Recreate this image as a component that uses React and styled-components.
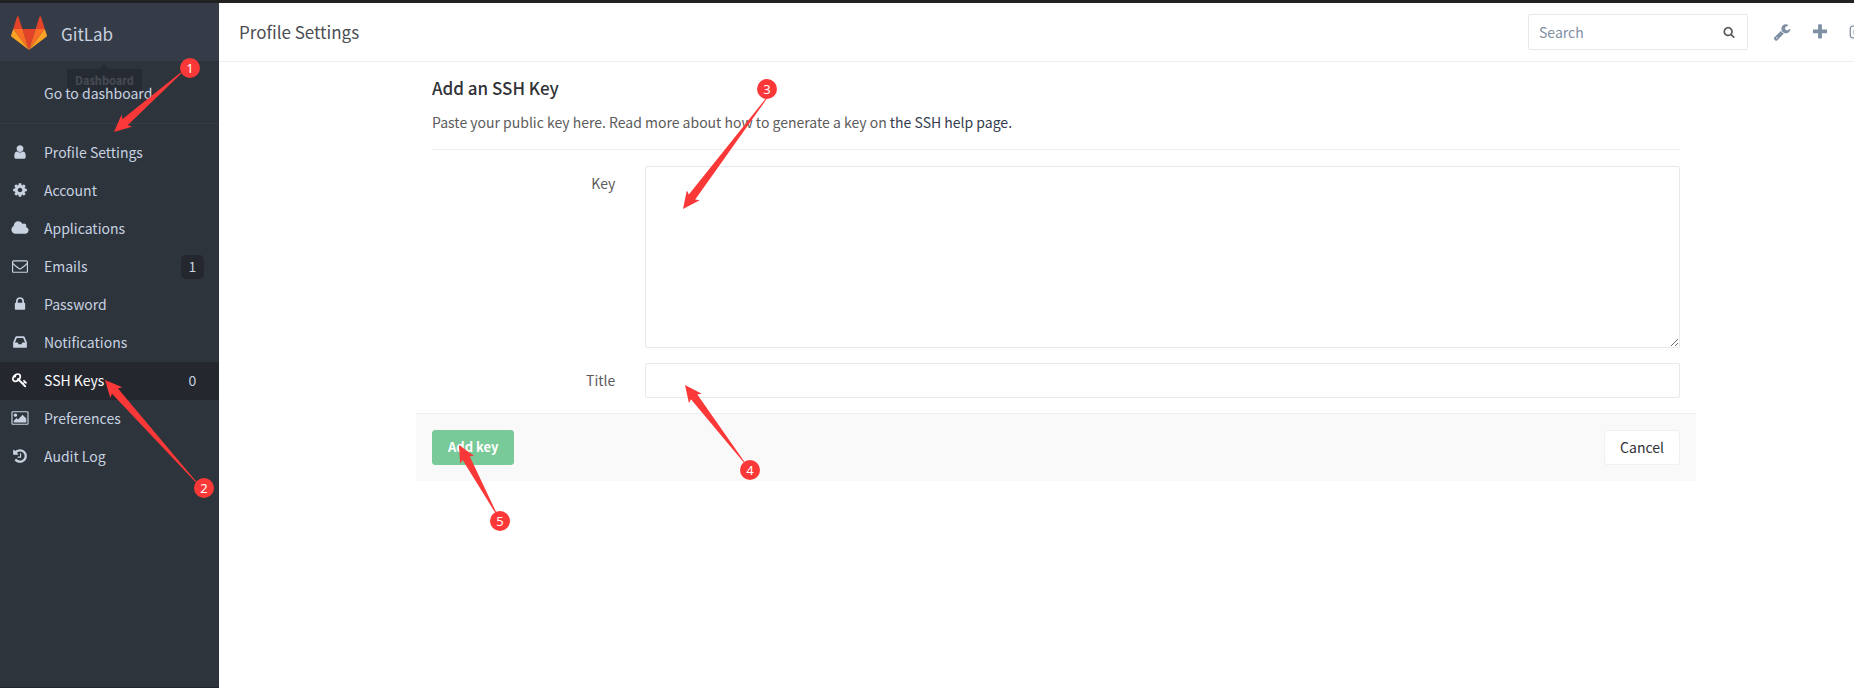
import React from "react";
import styled, { createGlobalStyle } from "styled-components";

const GlobalStyle = createGlobalStyle`
  *, *::before, *::after { box-sizing: border-box; }
  html, body, #root { height: 100%; }
  body {
    margin: 0;
    overflow: hidden;
    background: #fff;
    color: #5c5c5c;
    font-family: "Noto Sans CJK SC", "Liberation Sans", sans-serif;
    font-size: 14px;
    line-height: 20px;
  }
  a { color: inherit; text-decoration: none; }
`;

const ICONS = {
  user: "M1536 1399q0 109-62.5 187t-150.5 78h-854q-88 0-150.5-78t-62.5-187q0-85 8.5-160.5t31.5-152 58.5-131 94-89 134.5-34.5q131 128 313 128t313-128q76 0 134.5 34.5t94 89 58.5 131 31.5 152 8.5 160.5zm-256-887q0 159-112.5 271.5t-271.5 112.5-271.5-112.5-112.5-271.5 112.5-271.5 271.5-112.5 271.5 112.5 112.5 271.5z",
  gear: "M1152 896q0-106-75-181t-181-75-181 75-75 181 75 181 181 75 181-75 75-181zm512-109v222q0 12-8 23t-20 13l-185 28q-19 54-39 91 35 50 107 138 10 12 10 25t-9 23q-27 37-99 108t-94 71q-12 0-26-9l-138-108q-44 23-91 38-16 136-29 186-7 28-36 28h-222q-14 0-24.5-8.5t-11.5-21.5l-28-184q-49-16-90-37l-141 107q-10 9-25 9-14 0-25-11-126-114-165-168-7-10-7-23 0-12 8-23 15-21 51-66.5t54-70.5q-27-50-41-99l-183-27q-13-2-21-12.5t-8-23.5v-222q0-12 8-23t19-13l186-28q14-46 39-92-40-57-107-138-10-12-10-24 0-10 9-23 26-36 98.5-107.5t94.5-71.5q13 0 26 10l138 107q44-23 91-38 16-136 29-186 7-28 36-28h222q14 0 24.5 8.5t11.5 21.5l28 184q49 16 90 37l142-107q9-9 24-9 13 0 25 10 129 119 165 170 7 8 7 22 0 12-8 23-15 21-51 66.5t-54 70.5q26 50 41 98l183 28q13 2 21 12.5t8 23.5z",
  cloud: "M1856 1152q0 159-112.5 271.5t-271.5 112.5h-1088q-185 0-316.5-131.5t-131.5-316.5q0-132 71-241.5t187-163.5q-2-28-2-43 0-212 150-362t362-150q158 0 286.5 88t187.5 230q70-62 166-62 106 0 181 75t75 181q0 75-41 138 129 30 213 134.5t84 239.5z",
  envelope: "M1664 1504v-768q-32 36-69 66-268 206-426 338-51 43-83 67t-86.5 48.5-102.5 24.5h-2q-48 0-102.5-24.5t-86.5-48.5-83-67q-158-132-426-338-37-30-69-66v768q0 13 9.5 22.5t22.5 9.5h1472q13 0 22.5-9.5t9.5-22.5zm0-1051v-24.5l-.5-13-3-12.5-5.5-9-9-7.5-14-2.5h-1472q-13 0-22.5 9.5t-9.5 22.5q0 168 147 284 193 152 401 317 6 5 35 29.5t46 37.5 44.5 31.5 50.5 27.5 43 9h2q20 0 43-9t50.5-27.5 44.5-31.5 46-37.5 35-29.5q208-165 401-317 54-43 100.5-115.5t46.5-131.5zm128-37v1088q0 66-47 113t-113 47h-1472q-66 0-113-47t-47-113v-1088q0-66 47-113t113-47h1472q66 0 113 47t47 113z",
  lock: "M640 768h512v-192q0-106-75-181t-181-75-181 75-75 181v192zm832 96v576q0 40-28 68t-68 28h-960q-40 0-68-28t-28-68v-576q0-40 28-68t68-28h32v-192q0-184 132-316t316-132 316 132 132 316v192h32q40 0 68 28t28 68z",
  inbox: "M1151 960h316q-1-3-2.5-8t-2.5-8l-212-496h-708l-212 496q-1 2-2.5 8t-2.5 8h316l95 192h320zm513 30v482q0 26-19 45t-45 19h-1408q-26 0-45-19t-19-45v-482q0-62 25-123l238-552q10-25 36.5-42t52.5-17h832q26 0 52.5 17t36.5 42l238 552q25 61 25 123z",
  key: "M832 512q0-80-56-136t-136-56-136 56-56 136q0 42 19 83-41-19-83-19-80 0-136 56t-56 136 56 136 136 56 136-56 56-136q0-42-19-83 41 19 83 19 80 0 136-56t56-136zm851 704q0 17-49 66t-66 49q-9 0-28.5-16t-36.5-33-38.5-40-24.5-26l-96 96 220 220q28 28 28 68 0 42-39 81t-81 39q-40 0-68-28l-671-671q-176 131-365 131-163 0-265.5-102.5t-102.5-265.5q0-160 95-313t248-248 313-95q163 0 265.5 102.5t102.5 265.5q0 189-131 365l355 355 96-96q-3-3-26-24.5t-40-38.5-33-36.5-16-28.5q0-17 49-66t66-49q13 0 23 10 6 6 46 44.5t82 79.5 86.5 86 73 78 28.5 41z",
  picture: "M576 576q0 80-56 136t-136 56-136-56-56-136 56-136 136-56 136 56 56 136zm1024 384v448h-1408v-192l320-320 160 160 512-512zm96-704h-1600q-13 0-22.5 9.5t-9.5 22.5v1216q0 13 9.5 22.5t22.5 9.5h1600q13 0 22.5-9.5t9.5-22.5v-1216q0-13-9.5-22.5t-22.5-9.5zm160 32v1216q0 66-47 113t-113 47h-1600q-66 0-113-47t-47-113v-1216q0-66 47-113t113-47h1600q66 0 113 47t47 113z",
  history: "M1664 896q0 156-61 298t-164 245-245 164-298 61q-172 0-327-72.5t-264-204.5q-7-10-6.5-22.5t8.5-20.5l137-138q10-9 25-9 16 2 23 12 73 95 179 147t225 52q104 0 198.5-40.5t163.5-109.5 109.5-163.5 40.5-198.5-40.5-198.5-109.5-163.5-163.5-109.5-198.5-40.5q-98 0-188 35.5t-160 101.5l137 138q31 30 14 69-17 40-59 40h-448q-26 0-45-19t-19-45v-448q0-42 40-59 39-17 69 14l130 129q107-101 244.5-156.5t284.5-55.5q156 0 298 61t245 164 164 245 61 298zm-640-288v448q0 14-9 23t-23 9h-320q-14 0-23-9t-9-23v-64q0-14 9-23t23-9h224v-352q0-14 9-23t23-9h64q14 0 23 9t9 23z",
  search: "M1216 832q0-185-131.5-316.5t-316.5-131.5-316.5 131.5-131.5 316.5 131.5 316.5 316.5 131.5 316.5-131.5 131.5-316.5zm512 832q0 52-38 90t-90 38q-54 0-90-38l-343-342q-179 124-399 124-143 0-273.5-55.5t-225-150-150-225-55.5-273.5 55.5-273.5 150-225 225-150 273.5-55.5 273.5 55.5 225 150 150 225 55.5 273.5q0 220-124 399l343 343q37 37 37 90z",
  wrench: "M448 1472q0-26-19-45t-45-19-45 19-19 45 19 45 45 19 45-19 19-45zm644-420l-682 682q-37 37-90 37-52 0-91-37l-106-108q-38-36-38-90 0-53 38-91l681-681q39 98 114.5 173.5t173.5 114.5zm634-435q0 39-23 106-47 134-164.5 217.5t-258.5 83.5q-185 0-316.5-131.5t-131.5-316.5 131.5-316.5 316.5-131.5q58 0 121.5 16.5t107.5 46.5q16 11 16 28t-16 28l-293 169v224l193 107q5-3 79-48.5t135.5-81 70.5-35.5q15 0 23.5 10t8.5 25z",
  plus: "M1600 736v192q0 40-28 68t-68 28h-416v416q0 40-28 68t-68 28h-192q-40 0-68-28t-28-68v-416h-416q-40 0-68-28t-28-68v-192q0-40 28-68t68-28h416v-416q0-40 28-68t68-28h192q40 0 68 28t28 68v416h416q40 0 68 28t28 68z",
  signOut: "M704 1440q0 4 1 20t.5 26.5-3 23.5-10 19.5-20.5 6.5h-320q-119 0-203.5-84.5t-84.5-203.5v-704q0-119 84.5-203.5t203.5-84.5h320q13 0 22.5 9.5t9.5 22.5q0 4 1 20t.5 26.5-3 23.5-10 19.5-20.5 6.5h-320q-66 0-113 47t-47 113v704q0 66 47 113t113 47h312l11.5 1 11.5 3 8 5.5 7 9 2 13.5zm928-544q0 26-19 45l-544 544q-19 19-45 19t-45-19-19-45v-288h-448q-26 0-45-19t-19-45v-384q0-26 19-45t45-19h448v-288q0-26 19-45t45-19 45 19l544 544q19 19 19 45z",
};

/* Glyph drawings share a 1792-unit em, with room for the wider ones. */
function Icon({ name, size }) {
  return (
    <svg
      width={size + 2}
      height={size}
      viewBox={`${-1792 / size} 0 ${(1792 * (size + 2)) / size} 1792`}
      fill="currentColor"
      aria-hidden="true"
    >
      <path d={ICONS[name]} />
    </svg>
  );
}

/* The page is wider than the window: its right edge runs 39px past it. */
const Page = styled.div`
  position: relative;
  display: grid;
  grid-template-columns: 219px minmax(0, 1fr);
  width: calc(100% + 39px);
  min-height: 100%;
  border-top: 3px solid #222;
`;

const Sidebar = styled.aside`
  background: #2d343c;
  color: #c8d2e0;
  border-bottom: 1px solid #22262e;
`;

const Brand = styled.a`
  position: relative;
  display: flex;
  align-items: center;
  gap: 14px;
  height: 58px;
  padding: 2px 0 0 11px;
  background: #353c47;
  font-size: 17px;
`;

const BrandName = styled.span`
  padding-top: 2px;
`;

const Tooltip = styled.span`
  position: absolute;
  top: 66px;
  left: 67px;
  width: 75px;
  padding: 1px 0 3px;
  border-radius: 2px;
  background: #262b33;
  color: #464c55;
  font-size: 11px;
  font-weight: 700;
  text-align: center;

  &::before {
    content: "";
    position: absolute;
    bottom: 100%;
    left: 32px;
    border: 5px solid transparent;
    border-top: 0;
    border-bottom-color: #262b33;
  }
`;

const NavList = styled.ul`
  margin: 0;
  padding: 0;
  list-style: none;
`;

const DashboardLink = styled.a`
  position: relative;
  display: block;
  margin-bottom: 10px;
  padding: 22px 0 20px 44px;
  border-bottom: 1px solid #353c47;
`;

const NavLink = styled.a`
  display: flex;
  align-items: center;
  height: 38px;
  padding: 0 15px 2px 11px;
  background: ${(p) => (p.$active ? "#24272e" : "transparent")};
  color: ${(p) => (p.$active ? "#fff" : "inherit")};
`;

const NavLabel = styled.span`
  flex: 1;
  margin-left: 15px;
`;

const Count = styled.span`
  width: 23px;
  margin-top: 2px;
  padding: 1px 0 3px;
  border-radius: 5px;
  background: #24272e;
  color: #c8d2e0;
  text-align: center;
`;

const Header = styled.header`
  display: flex;
  align-items: center;
  height: 59px;
  padding: 0 25px 0 20px;
  border-bottom: 1px solid #eee;
`;

const PageTitle = styled.h1`
  flex: 1;
  margin: 0;
  color: #4c4e54;
  font-size: 17px;
  font-weight: 400;
`;

const SearchForm = styled.form`
  display: flex;
  align-items: center;
  width: 220px;
  height: 36px;
  margin-right: 24px;
  padding: 0 11px 0 10px;
  border: 1px solid #e7e9ed;
  border-radius: 2px;
  color: #5c5c5c;
`;

const SearchInput = styled.input`
  flex: 1;
  min-width: 0;
  padding: 0;
  border: 0;
  outline: 0;
  background: transparent;
  font: inherit;
  font-size: 14px;

  &::placeholder { color: #7f8fa4; opacity: 1; }
`;

const HeaderActions = styled.nav`
  display: flex;
  gap: 18px;
  color: #7f8fa4;

  a { display: flex; }
`;

const Content = styled.main`
  max-width: 1280px;
  margin: 0 auto;
  padding: 15px 16px 0;
`;

const SectionTitle = styled.h2`
  margin: 0 0 13px;
  color: #313236;
  font-size: 17px;
  font-weight: 500;
  line-height: 22px;
`;

const Hint = styled.p`
  margin: 0;
  padding-bottom: 17px;
  border-bottom: 1px solid #eee;

  a { color: #333c4e; }
`;

/* The label takes a sixth of the row, gutters included. */
const FormRow = styled.div`
  display: grid;
  grid-template-columns: calc((100% + 16px) / 6 - 14px) 1fr;
  gap: 30px;
  margin: 16px 0 15px -16px;

  & + & { margin-top: 0; }
`;

const FieldLabel = styled.label`
  padding-top: 7px;
  text-align: right;
`;

const fieldLook = `
  display: block;
  width: 100%;
  padding: 6px 10px;
  border: 1px solid #e7e9ed;
  border-radius: 2px;
  outline: 0;
  background: #fff;
  color: #5c5c5c;
  font: inherit;
`;

const KeyArea = styled.textarea`
  ${fieldLook}
  height: 182px;
  resize: vertical;
`;

const TitleInput = styled.input`
  ${fieldLook}
  height: 35px;
`;

const FormActions = styled.div`
  display: flex;
  justify-content: space-between;
  margin: 0 -16px;
  padding: 16px;
  border-top: 1px solid #eee;
  background: #f9f9f9;
`;

const Button = styled.button`
  height: 35px;
  padding: 0 15px 1px;
  border: 1px solid ${(p) => (p.$primary ? "#78ca98" : "#f0f0f0")};
  border-radius: 3px;
  background: ${(p) => (p.$primary ? "#78ca98" : "#fff")};
  color: ${(p) => (p.$primary ? "#fff" : "#313236")};
  font: inherit;
  font-size: ${(p) => (p.$primary ? 13 : 14)}px;
  font-weight: ${(p) => (p.$primary ? 700 : 400)};
`;

const ArrowLayer = styled.svg`
  position: absolute;
  top: -3px;
  left: 0;
  overflow: visible;
  pointer-events: none;
`;

const Marker = styled.span`
  position: absolute;
  top: ${(p) => p.$y - 13}px;
  left: ${(p) => p.$x - 10}px;
  width: 20px;
  height: 20px;
  border-radius: 50%;
  background: #fb3838;
  color: #fff;
  font-family: "Noto Sans", sans-serif;
  font-size: 13px;
  text-align: center;
`;

const STEPS = [
  { at: [190, 68], from: [181, 73], to: [114, 132] },
  { at: [204, 488], from: [196, 482], to: [105, 380] },
  { at: [767, 89], from: [766, 99], to: [683, 209] },
  { at: [750, 470], from: [744, 462], to: [685, 385] },
  { at: [500, 521], from: [496, 513], to: [459, 445] },
];

function arrowPoints([x1, y1], [x2, y2]) {
  const length = Math.hypot(x2 - x1, y2 - y1);
  const ux = (x1 - x2) / length;
  const uy = (y1 - y2) / length;
  return [[0, 0], [17, 8], [15, 4], [length, 0.5], [length, -0.5], [15, -4], [17, -8]]
    .map(([d, w]) => `${x2 + ux * d - uy * w},${y2 + uy * d + ux * w}`)
    .join(" ");
}

function Logo() {
  return (
    <svg width="36" height="34" viewBox="0 0 36 34" aria-hidden="true">
      <path d="M18 34 24.6 13H11.4z" fill="#e24329" />
      <path d="M18 34 11.4 13H2.2z" fill="#fc6d26" />
      <path d="M2.2 13 .1 19.2a1.4 1.4 0 0 0 .5 1.5L18 34z" fill="#fca326" />
      <path d="M2.2 13h9.2L7.4.6a.7.7 0 0 0-1.3 0z" fill="#e24329" />
      <path d="M18 34 24.6 13h9.2z" fill="#fc6d26" />
      <path d="m33.8 13 2.1 6.2a1.4 1.4 0 0 1-.5 1.5L18 34z" fill="#fca326" />
      <path d="M33.8 13h-9.2L28.6.6a.7.7 0 0 1 1.3 0z" fill="#e24329" />
    </svg>
  );
}

const NAV = [
  ["user", "Profile Settings"],
  ["gear", "Account"],
  ["cloud", "Applications"],
  ["envelope", "Emails", 1],
  ["lock", "Password"],
  ["inbox", "Notifications"],
  ["key", "SSH Keys", 0],
  ["picture", "Preferences"],
  ["history", "Audit Log"],
];

export default function App() {
  return (
    <>
      <GlobalStyle />
      <Page>
        <Sidebar>
          <Brand href="#">
            <Logo />
            <BrandName>GitLab</BrandName>
            <Tooltip role="tooltip">Dashboard</Tooltip>
          </Brand>
          <nav>
            <DashboardLink href="#">Go to dashboard</DashboardLink>
            <NavList>
              {NAV.map(([icon, label, count]) => (
                <li key={label}>
                  <NavLink href="#" $active={icon === "key"}>
                    <Icon name={icon} size={16} />
                    <NavLabel>{label}</NavLabel>
                    {count !== undefined && <Count>{count}</Count>}
                  </NavLink>
                </li>
              ))}
            </NavList>
          </nav>
        </Sidebar>
        <div>
          <Header>
            <PageTitle>Profile Settings</PageTitle>
            <SearchForm role="search">
              <SearchInput type="search" placeholder="Search" aria-label="Search" />
              <Icon name="search" size={12} />
            </SearchForm>
            <HeaderActions aria-label="Account">
              <a href="#" aria-label="Admin area"><Icon name="wrench" size={18} /></a>
              <a href="#" aria-label="New project"><Icon name="plus" size={18} /></a>
              <a href="#" aria-label="Sign out"><Icon name="signOut" size={18} /></a>
            </HeaderActions>
          </Header>
          <Content>
            <SectionTitle>Add an SSH Key</SectionTitle>
            <Hint>
              Paste your public key here. Read more about how to generate a key on{" "}
              <a href="#">the SSH help page.</a>
            </Hint>
            <form>
              <FormRow>
                <FieldLabel htmlFor="key">Key</FieldLabel>
                <KeyArea id="key" />
              </FormRow>
              <FormRow>
                <FieldLabel htmlFor="title">Title</FieldLabel>
                <TitleInput id="title" type="text" />
              </FormRow>
              <FormActions>
                <Button type="submit" $primary>Add key</Button>
                <Button type="button">Cancel</Button>
              </FormActions>
            </form>
          </Content>
        </div>
        <ArrowLayer width="1" height="1" fill="#fb3838" aria-hidden="true">
          {STEPS.map(({ from, to }) => (
            <polygon key={to.join()} points={arrowPoints(from, to)} />
          ))}
        </ArrowLayer>
        {STEPS.map(({ at }, i) => (
          <Marker key={at.join()} $x={at[0]} $y={at[1]}>{i + 1}</Marker>
        ))}
      </Page>
    </>
  );
}
